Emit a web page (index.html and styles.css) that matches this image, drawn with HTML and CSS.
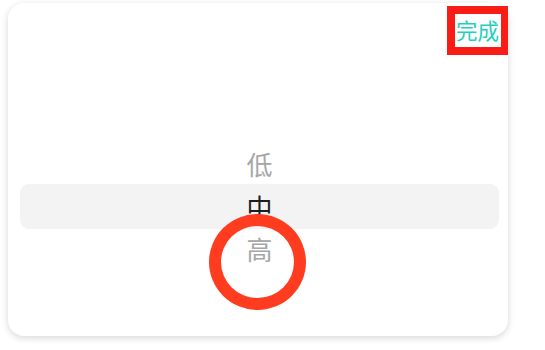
FILE: index.html
```html
<!DOCTYPE html>
<html lang="zh">
<head>
<meta charset="utf-8">
<link rel="stylesheet" href="styles.css">
</head>
<body>
<div class="card">
  <div class="header">
    <span class="done">完成</span>
  </div>
  <div class="picker">
    <div class="band"></div>
    <div class="row">低</div>
    <div class="row active">中</div>
    <div class="row">高</div>
  </div>
</div>
<div class="mark-box"></div>
<div class="mark-circle"></div>
</body>
</html>
```
FILE: styles.css
```css
html, body {
  margin: 0;
  padding: 0;
  background: #ffffff;
}
body {
  width: 545px;
  height: 350px;
  position: relative;
  font-family: "Noto Sans CJK SC", "Noto Sans", sans-serif;
  overflow: hidden;
}
.card {
  margin: 3px 0 0 8px;
  width: 500px;
  height: 333px;
  background: #ffffff;
  border-radius: 16px;
  box-shadow: 0 2px 7px rgba(0, 0, 0, 0.16);
  display: flex;
  flex-direction: column;
  box-sizing: border-box;
}
.header {
  display: flex;
  justify-content: flex-end;
  height: 56px;
  padding: 12px 9px 0 0;
  box-sizing: border-box;
}
.done {
  font-size: 21.5px;
  line-height: 30px;
  color: #1fd0bb;
}
.picker {
  position: relative;
  margin: 84px 9px 0 12px;
  display: flex;
  flex-direction: column;
}
.band {
  position: absolute;
  left: 0;
  right: 0;
  top: 41px;
  height: 45px;
  background: #f3f3f3;
  border-radius: 9px;
}
.row {
  position: relative;
  height: 42px;
  line-height: 42px;
  text-align: center;
  font-size: 26px;
  color: #a6a6a6;
}
.row.active {
  height: 43px;
  line-height: 43px;
  color: #1e1e1e;
}
.mark-box {
  position: absolute;
  left: 447px;
  top: 6px;
  width: 61px;
  height: 49px;
  box-sizing: border-box;
  border: 8px solid #fa1d16;
  border-right-width: 7px;
}
.mark-circle {
  position: absolute;
  left: 209px;
  top: 214px;
  width: 97px;
  height: 96px;
  box-sizing: border-box;
  border: 12px solid #ff3c1f;
  border-radius: 50%;
}
```
